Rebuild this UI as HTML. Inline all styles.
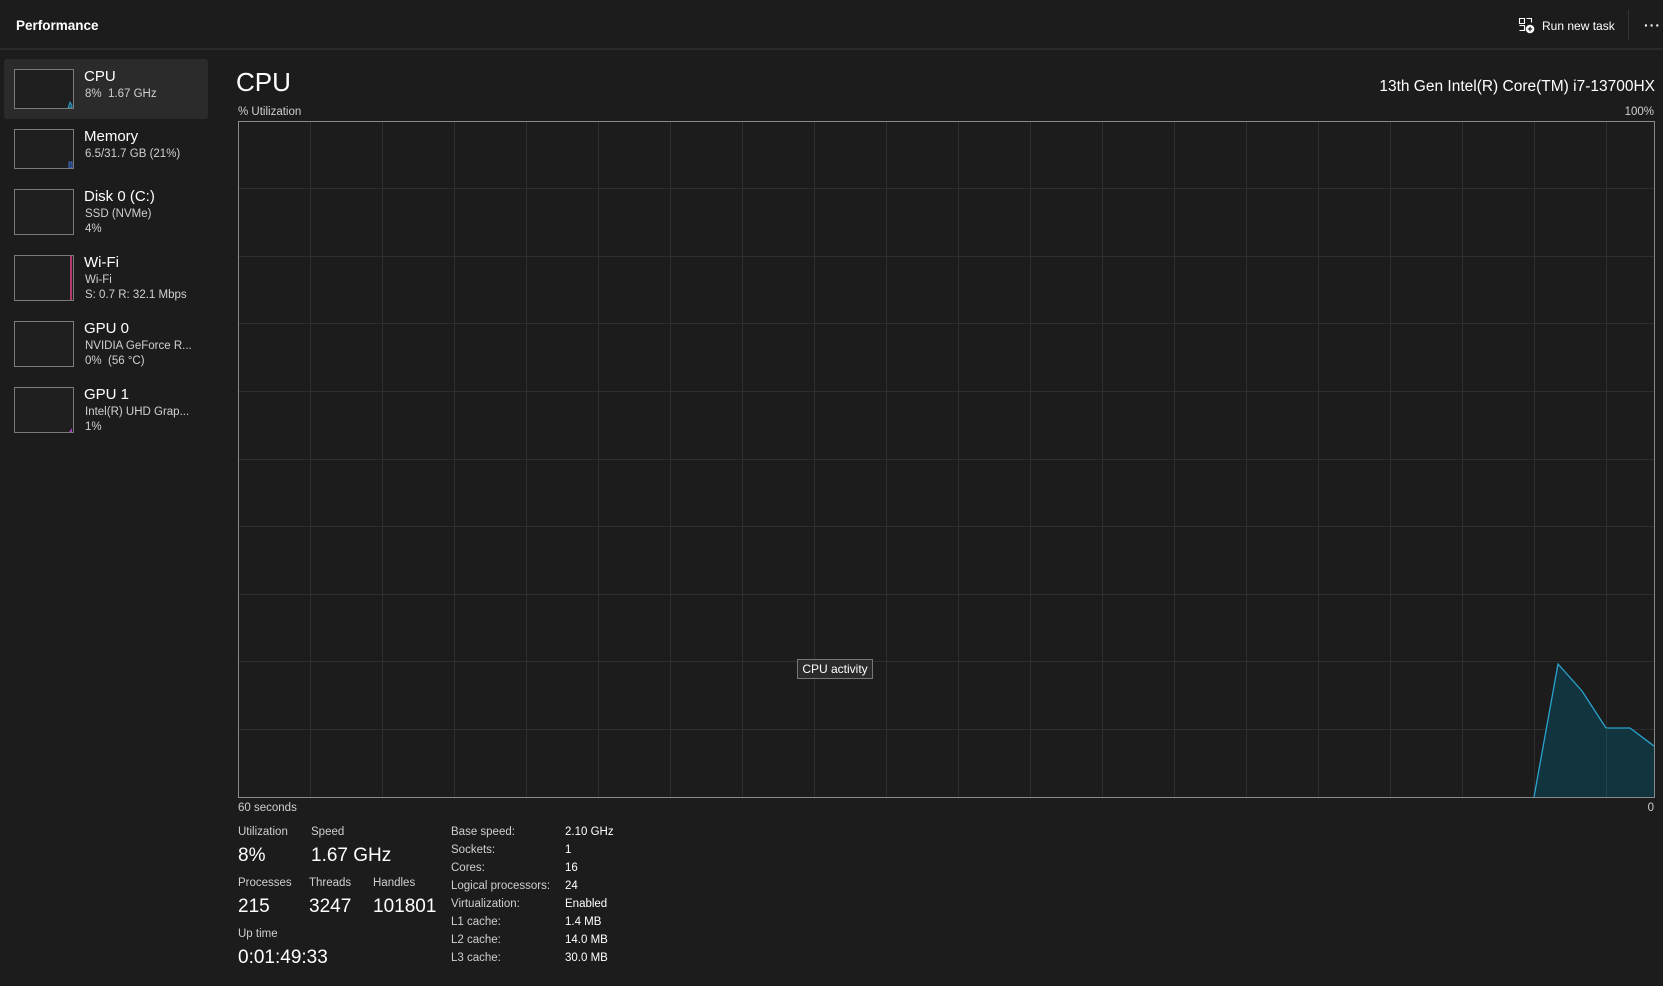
<!DOCTYPE html>
<html><head><meta charset="utf-8"><style>
*{margin:0;padding:0;box-sizing:border-box}
body{width:1663px;height:986px;background:#1c1c1c;color:#fff;font-family:"Segoe UI","Liberation Sans",sans-serif;position:relative;overflow:hidden}
.a{position:absolute;white-space:nowrap}
.th{position:absolute;left:14px;width:60px;height:40px;border:1px solid #7a7a7a;background:#1f1f1f}
.t{position:absolute;left:84px;font-size:15px;color:#fff}
.s{position:absolute;left:85px;font-size:11.5px;color:#d0d0d0;line-height:15px}
.l{font-size:11.5px;color:#cfcfcf}
.v{font-size:19px;color:#fff}
</style></head><body>
<div class="a" style="left:0;top:0;width:1663px;height:50px;background:#1c1c1c;border-bottom:2px solid #2a2a2a"></div>
<div class="a" style="left:16px;top:18px;font-size:13.5px;font-weight:bold">Performance</div>
<svg class="a" style="left:1518px;top:17px" width="18" height="18" viewBox="0 0 18 18" fill="none" stroke="#fff" stroke-width="1.1"><path d="M1.5 1.5h5v5h-5zM8.5 1.5h5v4M1.5 8.5h5v5h-5"/><circle cx="12" cy="12" r="4.3" fill="#fff" stroke="none"/><path d="M12 9.8v4.4M9.8 12h4.4" stroke="#1c1c1c" stroke-width="1.2"/></svg>
<div class="a" style="left:1542px;top:19px;font-size:12px">Run new task</div>
<div class="a" style="left:1628px;top:10px;width:1px;height:30px;background:#333"></div>
<div class="a" style="left:1644px;top:17px;font-size:14px;font-weight:bold;letter-spacing:1px">···</div>

<div class="a" style="left:4px;top:59px;width:204px;height:60px;background:#2b2b2b;border-radius:3px"></div>
<div class="th" style="top:69px"><svg width="58" height="38" style="position:absolute;left:0;top:0"><path d="M53 38 L55 32 L57 35 V38Z" fill="#1b5e78" stroke="#3aa8d0" stroke-width="0.8"/></svg></div>
<div class="t" style="top:68px">CPU</div><div class="s" style="top:87px">8%&nbsp; 1.67 GHz</div>
<div class="th" style="top:129px"><svg width="58" height="38" style="position:absolute;left:0;top:0"><path d="M54 38 V32 H57 V38Z" fill="#233a66" stroke="#4a7ae0" stroke-width="0.8"/></svg></div>
<div class="t" style="top:128px">Memory</div><div class="s" style="top:147px">6.5/31.7 GB (21%)</div>
<div class="th" style="top:189px;height:46px"></div>
<div class="t" style="top:188px">Disk 0 (C:)</div><div class="s" style="top:207px">SSD (NVMe)<br>4%</div>
<div class="th" style="top:255px;height:46px"><div style="position:absolute;right:1px;top:0;width:2px;height:44px;background:#b03a6a"></div></div>
<div class="t" style="top:254px">Wi-Fi</div><div class="s" style="top:273px">Wi-Fi<br>S: 0.7 R: 32.1 Mbps</div>
<div class="th" style="top:321px;height:46px"></div>
<div class="t" style="top:320px">GPU 0</div><div class="s" style="top:339px">NVIDIA GeForce R...<br>0%&nbsp; (56 °C)</div>
<div class="th" style="top:387px;height:46px"><svg width="58" height="44" style="position:absolute;left:0;top:0"><path d="M54 44 L57 40 V44Z" fill="#a040c0"/></svg></div>
<div class="t" style="top:386px">GPU 1</div><div class="s" style="top:405px">Intel(R) UHD Grap...<br>1%</div>

<div class="a" style="left:236px;top:67px;font-size:26px">CPU</div>
<div class="a" style="right:8px;top:78px;font-size:15.5px">13th Gen Intel(R) Core(TM) i7-13700HX</div>
<div class="a l" style="left:238px;top:106px">% Utilization</div>
<div class="a l" style="right:9px;top:106px">100%</div>

<svg class="a" style="left:237px;top:120px" width="1419" height="679">
<g stroke="#2f2f2f" stroke-width="1">
<path d="M73.5 1V677M145.5 1V677M217.5 1V677M289.5 1V677M361.5 1V677M433.5 1V677M505.5 1V677M577.5 1V677M649.5 1V677M721.5 1V677M793.5 1V677M865.5 1V677M937.5 1V677M1009.5 1V677M1081.5 1V677M1153.5 1V677M1225.5 1V677M1297.5 1V677M1369.5 1V677"/>
<path d="M1 68.5H1417M1 136.5H1417M1 203.5H1417M1 271.5H1417M1 339.5H1417M1 406.5H1417M1 474.5H1417M1 541.5H1417M1 609.5H1417"/>
</g>
<path d="M1297 677 L1321 544 L1345 571 L1369 608 L1393 608 L1417 626 V677Z" fill="#11343f"/>
<path d="M1297 677 L1321 544 L1345 571 L1369 608 L1393 608 L1417 626" fill="none" stroke="#2aa3cf" stroke-width="1.3"/>
<path d="M1369.5 608V677" stroke="#1e4450"/>
<rect x="1.5" y="1.5" width="1416" height="676" fill="none" stroke="#8a8a8a" stroke-width="1"/>
</svg>
<div class="a" style="left:797px;top:659px;width:76px;height:20px;border:1px solid #777;background:#2b2b2b;font-size:12px;text-align:center;line-height:18px">CPU activity</div>
<div class="a l" style="left:238px;top:802px">60 seconds</div>
<div class="a l" style="right:9px;top:802px">0</div>

<div class="a l" style="left:238px;top:826px">Utilization</div>
<div class="a l" style="left:311px;top:826px">Speed</div>
<div class="a v" style="left:238px;top:845px">8%</div>
<div class="a v" style="left:311px;top:845px">1.67 GHz</div>
<div class="a l" style="left:238px;top:877px">Processes</div>
<div class="a l" style="left:309px;top:877px">Threads</div>
<div class="a l" style="left:373px;top:877px">Handles</div>
<div class="a v" style="left:238px;top:896px">215</div>
<div class="a v" style="left:309px;top:896px">3247</div>
<div class="a v" style="left:373px;top:896px">101801</div>
<div class="a l" style="left:238px;top:928px">Up time</div>
<div class="a v" style="left:238px;top:947px">0:01:49:33</div>

<div class="a l" style="left:451px;top:823px;line-height:18px">Base speed:<br>Sockets:<br>Cores:<br>Logical processors:<br>Virtualization:<br>L1 cache:<br>L2 cache:<br>L3 cache:</div>
<div class="a l" style="left:565px;top:823px;line-height:18px;color:#fff">2.10 GHz<br>1<br>16<br>24<br>Enabled<br>1.4 MB<br>14.0 MB<br>30.0 MB</div>
</body></html>
